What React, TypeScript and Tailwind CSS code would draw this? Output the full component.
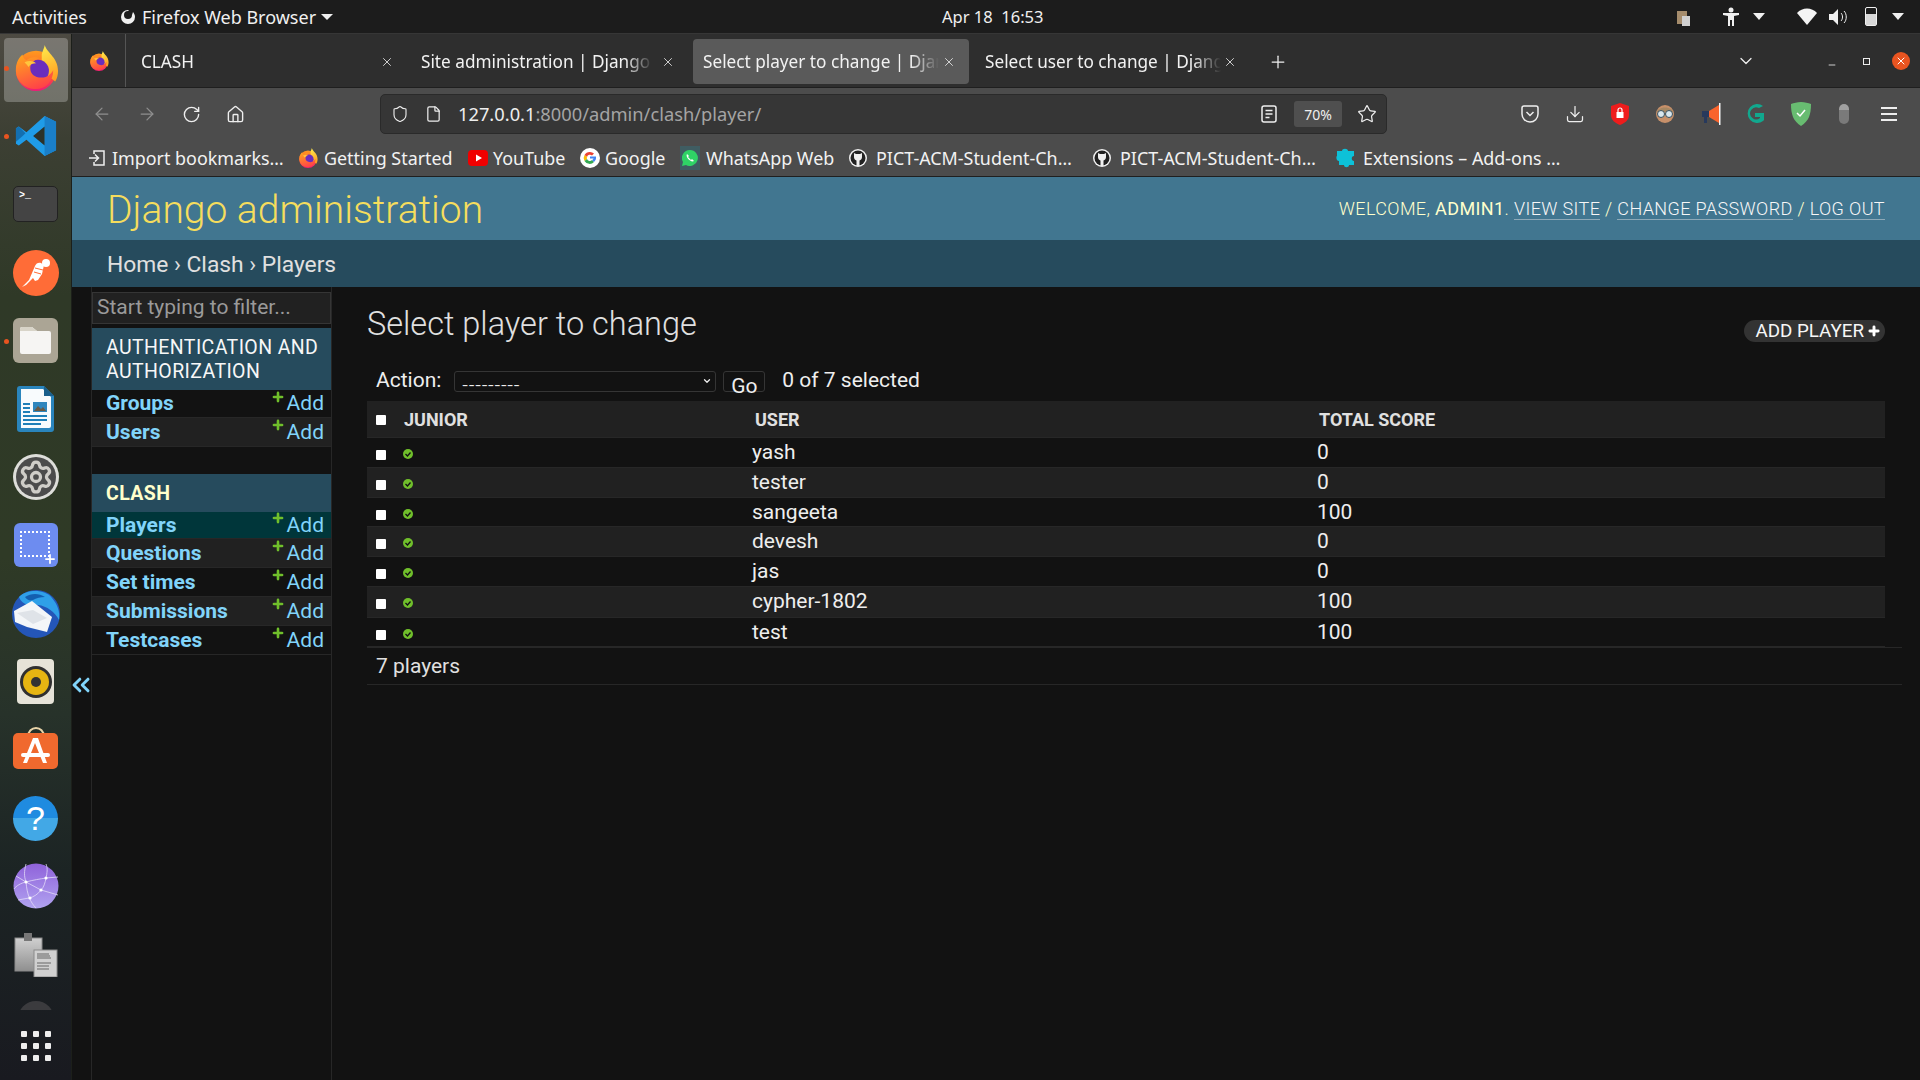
import { ArrowLeft, ArrowRight, ChevronDown, ChevronsLeft, Download, File, House, Minus, Plus, RotateCw, Settings, Shield, Star, X } from "lucide-react"

const chrome = "font-['Noto_Sans',sans-serif]"

function FirefoxLogo({ size }: { size: number }) {
    return (
        <svg width={size} height={size} viewBox="0 0 48 48">
            <defs>
                <linearGradient id="ff-globe" x1="0.5" y1="0" x2="0.5" y2="1">
                    <stop offset="0" stopColor="#ff9a1f" />
                    <stop offset="0.55" stopColor="#ff5a2c" />
                    <stop offset="1" stopColor="#ee1a78" />
                </linearGradient>
                <linearGradient id="ff-flame" x1="0.4" y1="0" x2="0.6" y2="1">
                    <stop offset="0" stopColor="#ffe84a" />
                    <stop offset="1" stopColor="#ff9a1f" />
                </linearGradient>
                <linearGradient id="ff-tail" x1="0.3" y1="0" x2="0.7" y2="1">
                    <stop offset="0" stopColor="#ffa01f" />
                    <stop offset="1" stopColor="#ff3d4a" />
                </linearGradient>
            </defs>
            <circle cx="24" cy="27" r="21" fill="url(#ff-globe)" />
            <path d="M30 10C31 5 33 3 33 0c3 9 14 13 14 27 0 4-1 8-3 11L30 27z" fill="url(#ff-flame)" />
            <circle cx="26" cy="27" r="11.500" fill="#6a2dbd" />
            <path d="M3 26c0-8 4-14 7-16 0 3 2 5 4 6 4-4 10-4 14-2-6 1-10 5-10 10 0 6 4 10 12 10 6 0 10-4 12-8 0 12-8 20-18 20C12 46 3 37 3 26z" fill="url(#ff-tail)" />
            <path d="M12 18c4-2 9-2 12 1-3 0-6 1-8 4-1-2-3-4-4-5z" fill="#ffc53d" />
        </svg>
    )
}

function VsCode() {
    return (
        <svg width="42" height="42" viewBox="0 0 44 44">
            <path d="M31 1l12 6v30l-12 6L12 26l-8 6-3-2v-16l3-2 8 6z" fill="#1f9ce8" />
            <path d="M31 1v42l12-6V7z" fill="#1a7fc9" />
            <path d="M31 12L19 22l12 10z" fill="#2c322a" />
            <path d="M1 14l3-2 7 7-3 3-7 6z" fill="#146fb0" />
        </svg>
    )
}

function DockIcon({ name }: { name: string }) {
    if (name === "firefox") return <FirefoxLogo size={46} />
    if (name === "vscode") return <VsCode />
    if (name === "terminal")
        return (
            <div className="relative w-[45px] h-[36px] rounded-[5px] bg-[#444444] border border-[#222222]">
                <span className="absolute left-[5px] top-[2px] text-[10px] leading-[14px] font-bold text-white font-['Liberation_Mono',monospace]">&gt;_</span>
            </div>
        )
    if (name === "postman")
        return (
            <svg width="46" height="46" viewBox="0 0 46 46">
                <circle cx="23" cy="23" r="23" fill="#ff6c37" />
                <path d="M9 37l7-7 6-14c1-3 4-4 6-3l3 2-2 9-4 6-3 1-2-3-4 4-3 3z" fill="#ffffff" />
                <circle cx="33" cy="13" r="4" fill="#ffffff" />
                <path d="M22 18l8 2M21 22l7 2" stroke="#ff6c37" strokeWidth="1" />
            </svg>
        )
    if (name === "files")
        return (
            <div className="w-[45px] h-[45px] rounded-[6px] bg-[#aba595] flex items-center justify-center">
                <svg width="33" height="29" viewBox="0 0 33 29">
                    <path d="M1 3a2 2 0 012-2h10l5 4h12a2 2 0 012 2v19a2 2 0 01-2 2H3a2 2 0 01-2-2z" fill="#f6f5f3" />
                    <path d="M1 3a2 2 0 012-2h10l5 4H1z" fill="#d8d4c8" />
                </svg>
            </div>
        )
    if (name === "writer")
        return (
            <svg width="37" height="46" viewBox="0 0 37 46">
                <path d="M3 0h24l10 10v33a3 3 0 01-3 3H3a3 3 0 01-3-3V3a3 3 0 013-3z" fill="#2a85bd" />
                <path d="M4 3h22l8 8v29a2 2 0 01-2 2H4z" fill="#f8fbfd" />
                <path d="M27 0l10 10H27z" fill="#1a5f8c" />
                <path d="M6 17h7v2H6zM6 21h7v2H6zM6 25h7v2H6zM6 29h24v2H6zM6 33h24v2H6zM6 37h18v2H6z" fill="#1f7fb8" />
                <rect x="16" y="16" width="14" height="10" fill="#2f86bd" />
                <path d="M17 25l4-5 3 3 2-2 3 4z" fill="#6b5a44" />
            </svg>
        )
    if (name === "settings")
        return (
            <div className="relative w-[46px] h-[46px] rounded-full bg-[#dededa] flex items-center justify-center">
                <div className="w-[40px] h-[40px] rounded-full bg-[#4c4c4c] flex items-center justify-center">
                    <Settings className="w-[36px] h-[36px] text-[#cfcdc8]" strokeWidth={2.2} />
                </div>
            </div>
        )
    if (name === "shot")
        return (
            <div className="relative w-[44px] h-[44px] rounded-[6px] bg-[#6d8cf0]">
                <div className="absolute left-[6px] top-[8px] w-[30px] h-[26px] border-2 border-dotted border-white" />
                <Plus className="absolute right-[1px] bottom-[1px] w-[14px] h-[14px] text-white" strokeWidth={3} />
            </div>
        )
    if (name === "thunderbird")
        return (
            <svg width="50" height="50" viewBox="0 0 50 50">
                <circle cx="25" cy="25" r="24" fill="#2456b8" />
                <path d="M8 8c8-8 26-8 33 1 6 7 8 14 7 22-4-8-12-14-21-15-7-1-15 2-19-8z" fill="#2fa0e8" />
                <path d="M14 8c6-4 14-4 20 0-4 0-9 1-12 3-3 1-6 0-8-3z" fill="#135fb0" />
                <path d="M3 22l18-10 20 16-5 15-20-5-12-5z" fill="#f4f6f8" />
                <path d="M6 24l16-3 14 8-14 6z" fill="#dfe3e8" />
            </svg>
        )
    if (name === "rhythmbox")
        return (
            <div className="w-[37px] h-[45px] rounded-[4px] bg-[#e6e3d8] flex items-center justify-center">
                <svg width="32" height="32" viewBox="0 0 32 32">
                    <circle cx="16" cy="16" r="16" fill="#303030" />
                    <circle cx="16" cy="16" r="13" fill="#e6b512" />
                    <circle cx="16" cy="16" r="5" fill="#333333" />
                </svg>
            </div>
        )
    if (name === "store")
        return (
            <svg width="46" height="46" viewBox="0 0 46 46">
                <path d="M15 10c0-12 16-12 16 0" fill="none" stroke="#e8d3a8" strokeWidth="2" />
                <rect y="6" width="45" height="36" rx="5" fill="#f0692e" />
                <path d="M20 11h5l9 25h-4l-8-20-8 20h-4z" fill="#ffffff" />
                <rect x="8" y="26" width="29" height="4" rx="2" fill="#ffffff" />
            </svg>
        )
    if (name === "help")
        return (
            <div className="w-[45px] h-[45px] rounded-full bg-[linear-gradient(#1f8be0_50%,#42a8e6_50%)] flex items-center justify-center text-white text-[34px] leading-none font-['Liberation_Sans',sans-serif]">?</div>
        )
    if (name === "network")
        return (
            <svg width="46" height="46" viewBox="0 0 46 46">
                <defs>
                    <linearGradient id="net" x1="0" y1="0" x2="0" y2="1">
                        <stop offset="0" stopColor="#8f62da" />
                        <stop offset="1" stopColor="#b1a3f0" />
                    </linearGradient>
                </defs>
                <circle cx="23" cy="23" r="22.5" fill="url(#net)" />
                <path d="M3 13l10 6 15 8 17 5M1 26c2-3 7-6 12-7 7-2 14-3 20-4l12-1M13 1c-2 8-2 12 0 18 1 12 4 20 10 26M33 1c2 5 1 9 0 14-1 5-2 9-5 12-3 4-7 7-12 8L5 37" fill="none" stroke="#e2daf8" strokeWidth="0.8" />
                <circle cx="13" cy="19" r="1.6" fill="#ffffff" />
                <circle cx="33" cy="15" r="1.6" fill="#ffffff" />
                <circle cx="28" cy="27" r="1.6" fill="#ffffff" />
                <circle cx="17" cy="35" r="1.6" fill="#ffffff" />
            </svg>
        )
    if (name === "clip")
        return (
            <svg width="44" height="44" viewBox="0 0 44 44">
                <defs>
                    <linearGradient id="clip-board" x1="0" y1="0" x2="0" y2="1">
                        <stop offset="0" stopColor="#d0d0d0" />
                        <stop offset="1" stopColor="#8f8f8f" />
                    </linearGradient>
                </defs>
                <rect x="1" y="5" width="27" height="33" fill="url(#clip-board)" stroke="#8a8a8a" />
                <rect x="10" y="0" width="8" height="8" fill="#777777" />
                <rect x="20" y="17" width="23" height="27" fill="#d0d0d0" stroke="#8a8a8a" />
                <path d="M23 21h12M23 23h13M23 25h14M23 30h14M23 33h12M23 36h12" stroke="#666666" strokeWidth="1" />
            </svg>
        )
    return null
}

function Dock() {
    const icons = ["firefox", "vscode", "terminal", "postman", "files", "writer", "settings", "shot", "thunderbird", "rhythmbox", "store", "help", "network", "clip"]
    return (
        <aside className="w-[72px] shrink-0 flex flex-col items-center border-r border-[#1c1f1a] bg-[linear-gradient(180deg,#4d4a42_0%,#3c3f33_10%,#2f3927_25%,#2f3a26_50%,#27322a_65%,#1c2424_80%,#191a20_100%)]">
            {icons.map((name, i) => (
                <div key={name} className="relative w-full h-[68.2px] flex items-center justify-center shrink-0">
                    {i === 0 && <div className="absolute left-[4px] top-[4px] w-[64px] h-[64px] rounded-[4px] bg-white/25" />}
                    {(i === 0 || i === 1 || i === 4) && <div className="absolute left-[4px] top-[32px] w-[5px] h-[5px] rounded-full bg-[#e95420]" />}
                    <div className="relative"><DockIcon name={name} /></div>
                </div>
            ))}
            <div className="h-[9px] w-[36px] mt-[12px] overflow-hidden shrink-0">
                <div className="w-[36px] h-[36px] rounded-full bg-[#3b3b3e]" />
            </div>
            <div className="mt-[21px] grid grid-cols-3 gap-x-[6px] gap-y-[6px]">
                {Array.from({ length: 9 }).map((_, i) => (
                    <span key={i} className="w-[6px] h-[6px] rounded-[1px] bg-[#eeeeee]" />
                ))}
            </div>
        </aside>
    )
}

function TopBar() {
    return (
        <div className={`${chrome} relative h-[34px] shrink-0 flex items-center bg-[#1c1c1c] border-b border-[#363636] text-[#f0f0f0] text-[18px]`}>
            <span className="ml-[12px] pt-[1px]">Activities</span>
            <svg className="ml-[33px]" width="16" height="16" viewBox="0 0 16 16">
                <path d="M8 1a7 7 0 107 7c0-2-1-4-2-5l-1 3a4 4 0 11-4-4l1-1z" fill="#f0f0f0" />
            </svg>
            <span className="ml-[6px] pt-[1px]">Firefox Web Browser</span>
            <span className="ml-[5px] w-0 h-0 border-x-[6px] border-x-transparent border-t-[6px] border-t-[#f0f0f0]" />
            <span className="absolute left-[942px] pt-[1px] text-[16.500px]">Apr 18&nbsp;&nbsp;16:53</span>
            <div className="ml-auto flex items-center mr-[16px]">
                <svg width="16" height="18" viewBox="0 0 16 18">
                    <rect x="1" y="3" width="10" height="13" fill="#a58c6c" />
                    <rect x="6" y="8" width="8" height="10" fill="#d0d0d0" />
                </svg>
                <svg className="ml-[30px]" width="18" height="20" viewBox="0 0 18 20">
                    <circle cx="9" cy="3" r="2.5" fill="#f0f0f0" />
                    <path d="M1 6h16v2l-5 1v10h-2v-6H8v6H6V9L1 8z" fill="#f0f0f0" />
                </svg>
                <span className="ml-[13px] w-0 h-0 border-x-[6px] border-x-transparent border-t-[7px] border-t-[#f0f0f0]" />
                <svg className="ml-[32px]" width="20" height="17" viewBox="0 0 20 17">
                    <path d="M0 5c5-6 15-6 20 0l-10 12z" fill="#f4f4f4" />
                </svg>
                <svg className="ml-[12px]" width="18" height="16" viewBox="0 0 18 16">
                    <path d="M0 5h4l5-5v16l-5-5H0z" fill="#f0f0f0" />
                    <path d="M12 4c2 2 2 6 0 8M15 2c3 3 3 9 0 12" fill="none" stroke="#f0f0f0" />
                </svg>
                <div className="ml-[18px] w-[12px] h-[19px] border border-[#f0f0f0] rounded-[2px] flex items-end">
                    <div className="w-full h-[11px] bg-[#d8d8d8]" />
                </div>
                <span className="ml-[15px] w-0 h-0 border-x-[6px] border-x-transparent border-t-[7px] border-t-[#f0f0f0]" />
            </div>
        </div>
    )
}

function Tab({ title, width, left, active, gapRight, textWidth }: { title: string; width: number; left: number; active?: boolean; gapRight: number; textWidth: number }) {
    return (
        <div
            className={`shrink-0 h-[45px] mt-[2px] flex items-center justify-between rounded-[4px] ${active ? "bg-[#5a5a5a]" : ""}`}
            style={{ width, paddingLeft: left, paddingRight: gapRight }}
        >
            <span className="overflow-hidden whitespace-nowrap text-[17.200px] text-[#f2f2f2] [mask-image:linear-gradient(to_right,black_88%,transparent)]" style={{ width: textWidth }}>{title}</span>
            <X className="w-[14px] h-[14px] shrink-0 text-[#e4e4e4]" strokeWidth={1.5} />
        </div>
    )
}

function TabStrip() {
    return (
        <div className={`${chrome} h-[54px] shrink-0 flex items-center bg-[#2e2e2e] border-b border-[#1f1f1f]`}>
            <div className="w-[54px] h-full flex items-center justify-center border-r border-[#555555] shrink-0">
                <FirefoxLogo size={20} />
            </div>
            <Tab title="CLASH" width={277} left={15} gapRight={9} textWidth={180} />
            <div className="w-[10px] shrink-0" />
            <Tab title="Site administration | Django site admin" width={270} left={8} gapRight={8} textWidth={232} />
            <div className="w-[10px] shrink-0" />
            <Tab title="Select player to change | Django site admin" active width={276} left={10} gapRight={13} textWidth={236} />
            <div className="w-[8px] shrink-0" />
            <Tab title="Select user to change | Django site admin" width={273} left={8} gapRight={13} textWidth={236} />
            <Plus className="ml-[18px] mt-[2px] w-[20px] h-[20px] text-[#f0f0f0] shrink-0" strokeWidth={1.5} />
            <ChevronDown className="ml-[448px] w-[20px] h-[20px] text-[#eeeeee] shrink-0" strokeWidth={1.5} />
            <Minus className="ml-[71px] w-[10px] h-[10px] mt-[8px] text-[#eeeeee] shrink-0" strokeWidth={2} />
            <div className="ml-[26px] w-[7px] h-[7px] border border-[#eeeeee] mt-[2px] shrink-0" />
            <div className="ml-[22px] w-[18px] h-[18px] rounded-full bg-[#e95420] flex items-center justify-center shrink-0">
                <X className="w-[12px] h-[12px] text-white" strokeWidth={2} />
            </div>
        </div>
    )
}

function NavBar() {
    return (
        <div className={`${chrome} h-[46px] shrink-0 flex items-center pt-[6px] bg-[#4c4c4c] text-[#eeeeee]`}>
            <ArrowLeft className="ml-[20px] w-[20px] h-[20px] text-[#8f8f8f] shrink-0" strokeWidth={1.5} />
            <ArrowRight className="ml-[25px] w-[20px] h-[20px] text-[#8f8f8f] shrink-0" strokeWidth={1.5} />
            <RotateCw className="ml-[25px] w-[19px] h-[19px] shrink-0" strokeWidth={1.75} />
            <House className="ml-[25px] w-[19px] h-[19px] shrink-0" strokeWidth={1.75} />
            <div className="ml-[135px] w-[1007px] h-[40px] flex items-center rounded-[5px] bg-[#363636] border border-[#2a2a2a] shrink-0">
                <Shield className="ml-[10px] w-[18px] h-[20px] shrink-0" strokeWidth={1.5} />
                <File className="ml-[16px] w-[17px] h-[18px] shrink-0" strokeWidth={1.75} />
                <span className="ml-[16px] text-[18.300px] whitespace-nowrap">
                    127.0.0.1<span className="text-[#a4a4a4]">:8000/admin/clash/player/</span>
                </span>
                <svg className="ml-auto shrink-0" width="16" height="18" viewBox="0 0 16 18">
                    <rect x="1" y="1" width="14" height="16" rx="2" fill="none" stroke="#eeeeee" strokeWidth="1.5" />
                    <path d="M4.5 5.5h7M4.5 9h7M4.5 12.5h4" stroke="#eeeeee" strokeWidth="1.5" />
                </svg>
                <div className="ml-[17px] w-[48px] h-[26px] rounded-[3px] bg-[#4f4f4f] flex items-center justify-center text-[14px]">70%</div>
                <Star className="ml-[15px] mr-[9px] w-[20px] h-[20px] shrink-0" strokeWidth={1.5} />
            </div>
            <svg className="ml-[134px] shrink-0" width="18" height="18" viewBox="0 0 18 18">
                <path d="M3 1h12a2 2 0 012 2v6a8 8 0 01-16 0V3a2 2 0 012-2z" fill="none" stroke="#eeeeee" strokeWidth="1.5" />
                <path d="M5.5 7L9 10.5 12.5 7" fill="none" stroke="#eeeeee" strokeWidth="1.5" />
            </svg>
            <Download className="ml-[26px] w-[20px] h-[20px] shrink-0" strokeWidth={1.5} />
            <svg className="ml-[26px] shrink-0" width="18" height="22" viewBox="0 0 18 22">
                <path d="M9 0l9 3v9c0 5-4 8-9 10-5-2-9-5-9-10V3z" fill="#ee1c1c" />
                <rect x="5.5" y="9" width="7" height="6" fill="#ffffff" />
                <path d="M7 9V7a2 2 0 014 0v2" fill="none" stroke="#ffffff" strokeWidth="1.2" />
            </svg>
            <svg className="ml-[27px] shrink-0" width="18" height="22" viewBox="0 0 18 22">
                <circle cx="9" cy="11" r="9" fill="#c7906a" />
                <path d="M1 9c1-6 15-6 16 0z" fill="#a58763" />
                <circle cx="5" cy="11" r="3.5" fill="#d8e6ee" stroke="#38505e" />
                <circle cx="13" cy="11" r="3.5" fill="#d8e6ee" stroke="#38505e" />
            </svg>
            <svg className="ml-[27px] shrink-0" width="20" height="22" viewBox="0 0 20 22">
                <path d="M1 8h7v6H1zM3 14h3v6H3z" fill="#27395c" />
                <path d="M8 8l10-6v18L8 14z" fill="#f9642d" />
                <rect x="18" y="0" width="1.5" height="22" fill="#f4f4f4" />
            </svg>
            <svg className="ml-[25px] shrink-0" width="20" height="22" viewBox="0 0 20 22">
                <path d="M17 3a9.5 9.5 0 100 15l1-1v-7h-9v4h5v1a6 6 0 11-1-10z" fill="#11a88e" />
            </svg>
            <svg className="ml-[25px] shrink-0" width="20" height="24" viewBox="0 0 20 24">
                <path d="M10 0c4 0 7 1 10 2 0 10-2 17-10 22C2 19 0 12 0 2c3-1 6-2 10-2z" fill="#68bc71" />
                <path d="M6 11l3 3 5-6" fill="none" stroke="#ffffff" strokeWidth="1.5" />
            </svg>
            <div className="ml-[28px] w-[10px] h-[20px] rounded-[5px] bg-[linear-gradient(#a0a0a0_30%,#7a7a7a_30%)] shrink-0" />
            <div className="ml-[32px] w-[16px] flex flex-col gap-[4px] shrink-0">
                <span className="h-[2px] bg-[#eeeeee]" />
                <span className="h-[2px] bg-[#eeeeee]" />
                <span className="h-[2px] bg-[#eeeeee]" />
            </div>
        </div>
    )
}

function GithubIcon() {
    return (
        <svg width="18" height="18" viewBox="0 0 18 18">
            <circle cx="9" cy="9" r="9" fill="#f0f0f0" />
            <circle cx="9" cy="9" r="7.5" fill="#222222" />
            <path d="M5 4l2 1h4l2-1v4c0 2-1 3-2.500 3.500V17h-3v-5.500C6 11 5 10 5 8z" fill="#f0f0f0" />
        </svg>
    )
}

function BookmarksBar() {
    const items = [
        {
            label: "Import bookmarks…",
            width: 210,
            gap: 6,
            icon: (
                <svg width="18" height="18" viewBox="0 0 18 18">
                    <path d="M6 5V2h10v14H6v-3" fill="none" stroke="#eeeeee" strokeWidth="1.5" />
                    <path d="M1 9h9M7 5.500L10.500 9 7 12.500" fill="none" stroke="#eeeeee" strokeWidth="1.5" />
                </svg>
            ),
        },
        { label: "Getting Started", width: 170, gap: 6, icon: <FirefoxLogo size={20} /> },
        {
            label: "YouTube",
            width: 112,
            gap: 5,
            icon: (
                <svg width="20" height="16" viewBox="0 0 20 16">
                    <rect width="20" height="16" rx="4" fill="#f00000" />
                    <path d="M8 4.500L14 8l-6 3.500z" fill="#ffffff" />
                </svg>
            ),
        },
        {
            label: "Google",
            width: 100,
            gap: 5,
            icon: (
                <svg width="20" height="20" viewBox="0 0 20 20">
                    <circle cx="10" cy="10" r="10" fill="#ffffff" />
                    <path d="M10 4a6 6 0 014 1.500l-2 2A3 3 0 007 9L4.500 7A6 6 0 0110 4z" fill="#ea4335" />
                    <path d="M4.500 7L7 9a3 3 0 000 2l-2.500 2a6 6 0 010-6z" fill="#fbbc05" />
                    <path d="M4.500 13L7 11a3 3 0 005 1l2 2a6 6 0 01-9.500-1z" fill="#34a853" />
                    <path d="M14 14l-2-2c1-.5 1.300-1 1.500-1.500H10V8.500h6c.3 2.500-.5 4-2 5.500z" fill="#4285f4" />
                </svg>
            ),
        },
        {
            label: "WhatsApp Web",
            width: 169,
            gap: 6,
            icon: (
                <div className="w-[20px] h-[24px] bg-[#3f5d62] flex items-center justify-center">
                    <svg width="16" height="16" viewBox="0 0 16 16">
                        <path d="M8 0a8 8 0 00-7 12L0 16l4-1A8 8 0 108 0z" fill="#2fd366" />
                        <path d="M5 4c-2 3 4 9 7 7l-2-2-1 1-3-3 1-1z" fill="#ffffff" />
                    </svg>
                </div>
            ),
        },
        { label: "PICT-ACM-Student-Ch…", width: 244, gap: 9, icon: <GithubIcon /> },
        { label: "PICT-ACM-Student-Ch…", width: 243, gap: 9, icon: <GithubIcon /> },
        {
            label: "Extensions – Add-ons …",
            width: 300,
            gap: 7,
            icon: (
                <svg width="20" height="20" viewBox="0 0 20 20">
                    <path d="M1 3h5c0-3 6-3 6 0h6v5c-3 0-3 5 0 5v4h-5c0 3-5 3-5 0H3v-4C0 13 0 8 1 8z" fill="#0dc1d8" />
                </svg>
            ),
        },
    ]
    return (
        <div className={`${chrome} h-[43px] shrink-0 flex items-center pl-[16px] pt-[6px] bg-[#4c4c4c] border-b border-[#1f1f1f] text-[#f2f2f2] text-[17.900px]`}>
            {items.map((item, i) => (
                <div key={i} className="flex items-center shrink-0 whitespace-nowrap" style={{ width: item.width, gap: item.gap }}>
                    {item.icon}
                    <span>{item.label}</span>
                </div>
            ))}
        </div>
    )
}

function AppCaption({ title, active }: { title: string; active?: boolean }) {
    return (
        <div className={`bg-[#264b5d] pl-[14px] pr-[6px] pt-[8px] pb-[6px] text-[19.500px] leading-[24px] tracking-[0.4px] ${active ? "text-[#ffffcc] font-bold" : "text-[#f7f7f7]"}`}>
            {title}
        </div>
    )
}

function ModelRow({ name, shaded, current, height }: { name: string; shaded?: boolean; current?: boolean; height: number }) {
    return (
        <div
            className={`flex items-center justify-between pl-[14px] pr-[7px] pt-[1px] border-b border-[#272727] text-[#81d4fa] text-[21px] ${current ? "bg-[#00363a]" : shaded ? "bg-[#212121]" : ""}`}
            style={{ height }}
        >
            <span className="font-bold">{name}</span>
            <span className="flex items-center">
                <Plus className="w-[14px] h-[14px] text-[#70bf2b] -mt-[15px] mr-[2px]" strokeWidth={4.5} />
                Add
            </span>
        </div>
    )
}

function Sidebar() {
    return (
        <nav className="w-[241px] ml-[19px] shrink-0 border-x border-[#272727] pt-[5px]">
            <div className="h-[32px] bg-[#212121] border border-[#353535] flex items-center px-[4px] text-[21px] text-[#9a9a9a]">Start typing to filter...</div>
            <div className="mt-[4px]">
                <AppCaption title="AUTHENTICATION AND AUTHORIZATION" />
                <ModelRow name="Groups" height={28} />
                <ModelRow name="Users" shaded height={29} />
            </div>
            <div className="mt-[27px]">
                <AppCaption title="CLASH" active />
                <ModelRow name="Players" current height={27} />
                <ModelRow name="Questions" shaded height={29} />
                <ModelRow name="Set times" height={29} />
                <ModelRow name="Submissions" shaded height={29} />
                <ModelRow name="Testcases" height={29} />
            </div>
        </nav>
    )
}

function Checkbox() {
    return <span className="w-[10px] h-[10px] rounded-[1px] bg-white block" />
}

function PlayerRow({ user, score, shaded, height }: { user: string; score: string; shaded?: boolean; height: number }) {
    return (
        <div
            className={`grid grid-cols-[37px_348px_565px_1fr] items-center border-b border-[#272727] text-[21px] text-[#eeeeee] ${shaded ? "bg-[#212121]" : ""}`}
            style={{ height }}
        >
            <div className="pl-[9px] pt-[4px]"><Checkbox /></div>
            <div className="-ml-[1px] mt-[1px] h-[10px] flex">
                <svg width="10" height="10" viewBox="0 0 10 10">
                    <circle cx="5" cy="5" r="5" fill="#70bf2b" />
                    <path d="M2.500 5l2 2 3-3.500" fill="none" stroke="#121212" strokeWidth="1.300" />
                </svg>
            </div>
            <div className="-mt-[1px]">{user}</div>
            <div className="-mt-[1px]">{score}</div>
        </div>
    )
}

function ChangeList() {
    const rows = [
        { user: "yash", score: "0", height: 30 },
        { user: "tester", score: "0", height: 30, shaded: true },
        { user: "sangeeta", score: "100", height: 29 },
        { user: "devesh", score: "0", height: 30, shaded: true },
        { user: "jas", score: "0", height: 30 },
        { user: "cypher-1802", score: "100", height: 31, shaded: true },
        { user: "test", score: "100", height: 29 },
    ]
    return (
        <main className="ml-[35px] flex-1 min-w-0 pr-[18px]">
            <div className="w-[1518px]">
                <div className="flex items-start justify-between h-[79px]">
                    <h1 className="mt-[17px] text-[32.500px] leading-[40px] font-light text-[#e0e0e0]">Select player to change</h1>
                    <div className="mt-[33px] h-[22px] pl-[11px] pr-[4px] rounded-[11px] bg-[#333333] flex items-center text-[18.800px] text-[#f7f7f7]">
                        ADD PLAYER
                        <Plus className="ml-[3px] w-[14px] h-[14px] text-white" strokeWidth={5} />
                    </div>
                </div>
                <div className="flex items-center h-[30px] pl-[9px] text-[21px] text-[#eeeeee]">
                    <span>Action:</span>
                    <div className="ml-[13px] w-[262px] h-[21px] rounded-[3px] border border-[#353535] flex items-center justify-between pl-[7px] pr-[3px]">
                        <span className="text-[20px] leading-none font-light tracking-[0.7px] pt-[7px]">---------</span>
                        <ChevronDown className="w-[10px] h-[10px]" strokeWidth={3} />
                    </div>
                    <div className="ml-[7px] w-[42px] h-[21px] rounded-[3px] border border-[#353535] text-center text-[21px] leading-[28px]">Go</div>
                    <span className="ml-[17px]">0 of 7 selected</span>
                </div>
                <div className="mt-[5px] h-[37px] grid grid-cols-[37px_351px_564px_1fr] items-center bg-[#212121] border-b border-[#272727] text-[18px] font-bold text-[#e0e0e0]">
                    <div className="pl-[9px] pt-[2px]"><Checkbox /></div>
                    <div>JUNIOR</div>
                    <div>USER</div>
                    <div>TOTAL SCORE</div>
                </div>
                {rows.map(row => (
                    <PlayerRow key={row.user} {...row} />
                ))}
            </div>
            <div className="h-[38px] flex items-center pl-[9px] pt-[2px] border-y border-[#272727] text-[21px] text-[#e0e0e0]">7 players</div>
        </main>
    )
}

export default function App() {
    return (
        <div className="w-[1920px] h-[1080px] overflow-hidden flex flex-col bg-[#121212]">
            <TopBar />
            <div className="flex-1 min-h-0 flex">
                <Dock />
                <div className="flex-1 min-w-0 flex flex-col">
                    <TabStrip />
                    <NavBar />
                    <BookmarksBar />
                    <div className="flex-1 min-h-0 flex flex-col font-['Roboto',sans-serif]">
                        <header className="h-[63px] shrink-0 flex items-center justify-between pl-[35px] pr-[35px] bg-[#417690]">
                            <span className="mt-[3px] text-[39px] font-light text-[#f5dd5d]">Django administration</span>
                            <div className="text-[18px] font-light text-[#ffffcc] tracking-[0.38px]">
                                WELCOME, <strong className="font-normal">ADMIN1</strong>.{" "}
                                <span className="text-[#f7f7f7] border-b border-[#8da9b8]">VIEW SITE</span> /{" "}
                                <span className="text-[#f7f7f7] border-b border-[#8da9b8]">CHANGE PASSWORD</span> /{" "}
                                <span className="text-[#f7f7f7] border-b border-[#8da9b8]">LOG OUT</span>
                            </div>
                        </header>
                        <div className="h-[47px] shrink-0 flex items-center pl-[35px] pt-[4px] bg-[#264b5d] text-[22.800px] text-[#e0e0e0]">Home › Clash › Players</div>
                        <div className="flex-1 min-h-0 flex">
                            <div className="relative flex">
                                <ChevronsLeft className="absolute left-[-5px] top-[384px] w-[28px] h-[28px] text-[#81d4fa]" strokeWidth={2.5} />
                                <Sidebar />
                            </div>
                            <ChangeList />
                        </div>
                    </div>
                </div>
            </div>
        </div>
    )
}
